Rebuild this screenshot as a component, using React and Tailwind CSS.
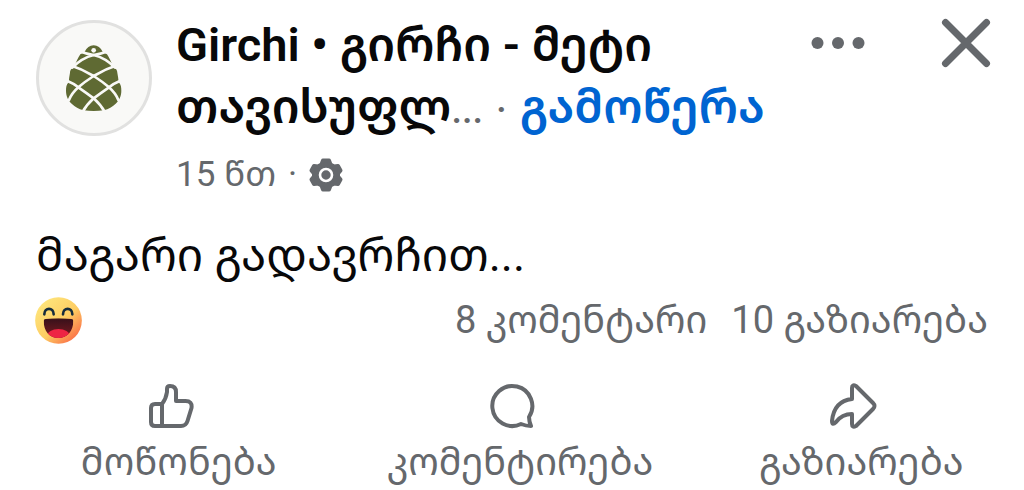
import React from 'react';

function PineconeLogo() {
  return (
    <svg viewBox="12 9 330 330" className="w-full h-full" aria-hidden="true">
      <path fill="#5f6a33" d="M176 76c-12 0-21 7-27 19-4 5-9 4-13 8-7 11-13 23-18 37-9 6-12 8-13 18-2 9-3 19-4 29-7 7-8 15-8 25 0 17 7 30 17 39 11 10 20 16 36 20 19 3 41 3 60 0 16-4 25-10 36-20 10-9 17-22 17-39 0-10-1-18-8-25-1-10-2-20-4-29-1-10-4-12-13-18-5-14-11-26-18-37-4-4-9-3-13-8-6-12-15-19-27-19z" />
      <g fill="none" stroke="#f9f9f7" strokeWidth="8" strokeLinecap="round">
        <path d="M134 94q22 9 42 11 20-2 42-11" />
        <path d="M176 105q-36 9-64 38M176 105q36 9 64 38" />
        <path d="M102 134Q140 146 176 168q28 18 46 34 20 18 28 38" />
        <path d="M250 134Q212 146 176 168q-28 18-46 34-20 18-28 38" />
        <path d="M96 182q20 8 34 20 26 18 46 33 22 20 34 42" />
        <path d="M256 182q-20 8-34 20-26 18-46 33-22 20-34 42" />
      </g>
      <circle cx="176" cy="91" r="7" fill="#f9f9f7" />
    </svg>
  );
}

function GearIcon() {
  return (
    <svg viewBox="0 0 34 34" className="w-[34px] h-[34px]" role="img" aria-label="აუდიტორია">
      <path
        fill="#65686c"
        stroke="#65686c"
        strokeWidth="4"
        strokeLinejoin="round"
        d="M14 2.500h6l1.500 4 3.500 2 4-.5 2.500 4.500-2.500 3v3l2.500 3-2.500 4.500-4-.5-3.500 2-1.500 4h-6l-1.500-4-3.500-2-4 .5L2.500 21.500l2.500-3v-3l-2.500-3L5 8l4 .5 3.500-2z"
      />
      <circle cx="17" cy="17" r="6" fill="#65686c" stroke="#fff" strokeWidth="2.600" />
    </svg>
  );
}

function DotsIcon() {
  return (
    <svg viewBox="0 0 54 12" className="w-[54px] h-3" fill="currentColor" aria-hidden="true">
      <circle cx="6.500" cy="6" r="6" />
      <circle cx="27" cy="6" r="6" />
      <circle cx="47.500" cy="6" r="6" />
    </svg>
  );
}

function CloseIcon() {
  return (
    <svg viewBox="0 0 50 50" className="w-[50px] h-[50px]" fill="none" stroke="currentColor" strokeWidth="7" strokeLinecap="round" aria-hidden="true">
      <path d="M4.500 4.500l41 41M45.500 4.500l-41 41" />
    </svg>
  );
}

function HahaIcon() {
  return (
    <svg viewBox="0 0 141 141" className="w-[47px] h-[47px]" role="img" aria-label="ჰაჰა">
      <defs>
        <linearGradient id="face" x1="0.15" y1="0.1" x2="0.9" y2="0.9">
          <stop offset="0" stopColor="#fee57b" />
          <stop offset="0.55" stopColor="#fdcc62" />
          <stop offset="1" stopColor="#fb6a46" />
        </linearGradient>
        <linearGradient id="mouth" x1="0" y1="0" x2="0" y2="1">
          <stop offset="0" stopColor="#33101a" />
          <stop offset="1" stopColor="#821b20" />
        </linearGradient>
        <clipPath id="mouthShape">
          <path d="M26 71q0-5 6-5 38-4 77 0 6 0 6 5c0 31-18 52-45 52S26 102 26 71z" />
        </clipPath>
      </defs>
      <circle cx="70.500" cy="70.500" r="70" fill="url(#face)" />
      <path d="M28 52c0-22 28-22 28 0M84 52c0-22 28-22 28 0" fill="none" stroke="#162c3c" strokeWidth="8" strokeLinecap="round" />
      <g clipPath="url(#mouthShape)">
        <rect x="20" y="60" width="100" height="70" fill="url(#mouth)" />
        <ellipse cx="70.500" cy="116" rx="34" ry="20" fill="#ee2444" />
      </g>
    </svg>
  );
}

function LikeIcon() {
  return (
    <svg viewBox="0 0 46 46" className="w-[46px] h-[46px]" fill="none" stroke="currentColor" strokeWidth="4" strokeLinejoin="round" strokeLinecap="round" aria-hidden="true">
      <path d="M14 21H7q-4 0-4 4v14q0 4 4 4h26q5 0 6.500-5l4-13q1-7-6-7H28V9q0-6-6-6-3 0-3 3v3q-1 7-5 12zM14 21v22" />
    </svg>
  );
}

function CommentIcon() {
  return (
    <svg viewBox="0 0 46 46" className="w-[46px] h-[46px]" fill="none" stroke="currentColor" strokeWidth="4" strokeLinejoin="round" strokeLinecap="round" aria-hidden="true">
      <path d="M40 34q0 4 2 9-5 0-10-2a20 20 0 1 1 8-7z" />
    </svg>
  );
}

function ShareIcon() {
  return (
    <svg viewBox="0 0 48 46" className="w-12 h-[46px]" fill="none" stroke="currentColor" strokeWidth="4" strokeLinejoin="round" strokeLinecap="round" aria-hidden="true">
      <path d="M23 16V5q0-4 4-2l17 17q3 3 0 6L27 43q-4 2-4-2V31Q13 31 7 39q-4 4-4-1Q5 18 23 16z" />
    </svg>
  );
}

const actions = [
  { label: 'მოწონება', Icon: LikeIcon },
  { label: 'კომენტირება', Icon: CommentIcon },
  { label: 'გაზიარება', Icon: ShareIcon },
];

export default function App() {
  return (
    <article className="bg-white text-[#080809] font-['Roboto','Noto_Sans_Georgian','Noto_Sans',sans-serif]">
      {/* Author row */}
      <header className="flex items-start pl-9 pr-[33px] pt-[14px]">
        <div className="w-[116px] h-[116px] mt-[6px] shrink-0 rounded-full border-[3px] border-[#e1e1e0] bg-[#f9f9f7] overflow-hidden">
          <PineconeLogo />
        </div>

        <div className="flex-1 min-w-0 ml-6">
          <h2 className="text-[47px] leading-[62px] font-semibold whitespace-nowrap">
            Girchi • გირჩი - მეტი
            <br />
            თავისუფლ<span className="text-[#65686c] text-[38px] font-medium">...</span>
            <span className="text-[#65686c] text-[38px] font-medium mx-[13px]">·</span>
            <a href="#follow" className="text-[#0064d1]">გამოწერა</a>
          </h2>
          <div className="flex items-center gap-3 h-[68px] text-[35px] text-[#65686c]">
            <span>15 წთ</span>
            <span>·</span>
            <GearIcon />
          </div>
        </div>

        <div className="flex items-center gap-[76px] mt-1 text-[#65686c]">
          <button type="button" aria-label="მეტი"><DotsIcon /></button>
          <button type="button" aria-label="დახურვა"><CloseIcon /></button>
        </div>
      </header>

      <p className="px-9 mt-4 text-[46px] leading-[60px]">მაგარი გადავრჩით...</p>

      {/* Reactions and counters */}
      <div className="flex items-center justify-between pl-[35px] pr-9 h-[70px] text-[38px] text-[#65686c]">
        <HahaIcon />
        <div className="flex gap-6">
          <span>8 კომენტარი</span>
          <span>10 გაზიარება</span>
        </div>
      </div>

      <div className="grid grid-cols-3 mt-7 text-[#65686c]">
        {actions.map(({ label, Icon }) => (
          <button key={label} type="button" className="flex flex-col items-center">
            <Icon />
            <span className="pl-4 text-[38px] leading-[66px]">{label}</span>
          </button>
        ))}
      </div>
    </article>
  );
}
